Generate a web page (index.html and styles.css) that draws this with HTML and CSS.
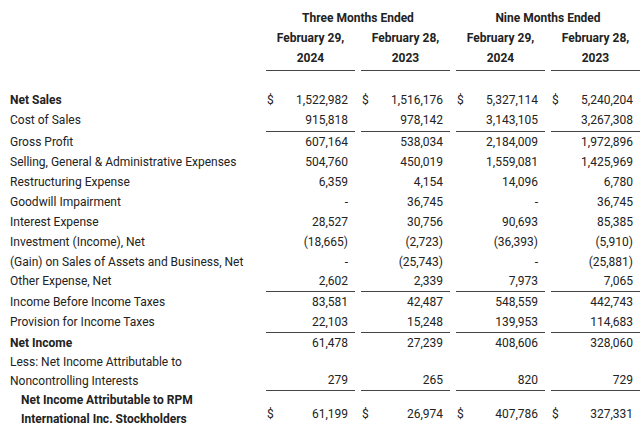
FILE: index.html
```html
<!DOCTYPE html>
<html lang="en">
<head>
<meta charset="utf-8">
<title>Income Statement</title>
<link rel="stylesheet" href="styles.css">
</head>
<body>
<div class="statement">
  <div class="row head-top">
    <div class="label"></div>
    <div class="group">Three Months Ended</div>
    <div class="group">Nine Months Ended</div>
  </div>
  <div class="row head-dates">
    <div class="label"></div>
    <div class="date">February 29,<br>2024</div>
    <div class="date">February 28,<br>2023</div>
    <div class="date">February 29,<br>2024</div>
    <div class="date">February 28,<br>2023</div>
  </div>
  <div class="spacer"></div>

  <div class="row">
    <div class="label strong">Net Sales</div>
    <div class="num"><span class="cur">$</span><span class="val">1,522,982</span></div>
    <div class="num"><span class="cur">$</span><span class="val">1,516,176</span></div>
    <div class="num"><span class="cur">$</span><span class="val">5,327,114</span></div>
    <div class="num"><span class="cur">$</span><span class="val">5,240,204</span></div>
  </div>
  <div class="row rule-first">
    <div class="label">Cost of Sales</div>
    <div class="num ruled"><span class="val">915,818</span></div>
    <div class="num ruled"><span class="val">978,142</span></div>
    <div class="num ruled"><span class="val">3,143,105</span></div>
    <div class="num ruled"><span class="val">3,267,308</span></div>
  </div>
  <div class="row">
    <div class="label">Gross Profit</div>
    <div class="num"><span class="val">607,164</span></div>
    <div class="num"><span class="val">538,034</span></div>
    <div class="num"><span class="val">2,184,009</span></div>
    <div class="num"><span class="val">1,972,896</span></div>
  </div>
  <div class="row">
    <div class="label">Selling, General &amp; Administrative Expenses</div>
    <div class="num"><span class="val">504,760</span></div>
    <div class="num"><span class="val">450,019</span></div>
    <div class="num"><span class="val">1,559,081</span></div>
    <div class="num"><span class="val">1,425,969</span></div>
  </div>
  <div class="row">
    <div class="label">Restructuring Expense</div>
    <div class="num"><span class="val">6,359</span></div>
    <div class="num"><span class="val">4,154</span></div>
    <div class="num"><span class="val">14,096</span></div>
    <div class="num"><span class="val">6,780</span></div>
  </div>
  <div class="row">
    <div class="label">Goodwill Impairment</div>
    <div class="num"><span class="val">-</span></div>
    <div class="num"><span class="val">36,745</span></div>
    <div class="num"><span class="val">-</span></div>
    <div class="num"><span class="val">36,745</span></div>
  </div>
  <div class="row">
    <div class="label">Interest Expense</div>
    <div class="num"><span class="val">28,527</span></div>
    <div class="num"><span class="val">30,756</span></div>
    <div class="num"><span class="val">90,693</span></div>
    <div class="num"><span class="val">85,385</span></div>
  </div>
  <div class="row">
    <div class="label">Investment (Income), Net</div>
    <div class="num"><span class="val">(18,665)</span></div>
    <div class="num"><span class="val">(2,723)</span></div>
    <div class="num"><span class="val">(36,393)</span></div>
    <div class="num"><span class="val">(5,910)</span></div>
  </div>
  <div class="row">
    <div class="label">(Gain) on Sales of Assets and Business, Net</div>
    <div class="num"><span class="val">-</span></div>
    <div class="num"><span class="val">(25,743)</span></div>
    <div class="num"><span class="val">-</span></div>
    <div class="num"><span class="val">(25,881)</span></div>
  </div>
  <div class="row tight">
    <div class="label">Other Expense, Net</div>
    <div class="num ruled"><span class="val">2,602</span></div>
    <div class="num ruled"><span class="val">2,339</span></div>
    <div class="num ruled"><span class="val">7,973</span></div>
    <div class="num ruled"><span class="val">7,065</span></div>
  </div>
  <div class="row">
    <div class="label">Income Before Income Taxes</div>
    <div class="num"><span class="val">83,581</span></div>
    <div class="num"><span class="val">42,487</span></div>
    <div class="num"><span class="val">548,559</span></div>
    <div class="num"><span class="val">442,743</span></div>
  </div>
  <div class="row">
    <div class="label">Provision for Income Taxes</div>
    <div class="num ruled"><span class="val">22,103</span></div>
    <div class="num ruled"><span class="val">15,248</span></div>
    <div class="num ruled"><span class="val">139,953</span></div>
    <div class="num ruled"><span class="val">114,683</span></div>
  </div>
  <div class="row">
    <div class="label strong">Net Income</div>
    <div class="num"><span class="val">61,478</span></div>
    <div class="num"><span class="val">27,239</span></div>
    <div class="num"><span class="val">408,606</span></div>
    <div class="num"><span class="val">328,060</span></div>
  </div>
  <div class="row tight">
    <div class="label">Less: Net Income Attributable to<br>Noncontrolling Interests</div>
    <div class="num ruled bottom"><span class="val">279</span></div>
    <div class="num ruled bottom"><span class="val">265</span></div>
    <div class="num ruled bottom"><span class="val">820</span></div>
    <div class="num ruled bottom"><span class="val">729</span></div>
  </div>
  <div class="row tight final">
    <div class="label strong indent">Net Income Attributable to RPM<br>International Inc. Stockholders</div>
    <div class="num bottom"><span class="cur">$</span><span class="val">61,199</span></div>
    <div class="num bottom"><span class="cur">$</span><span class="val">26,974</span></div>
    <div class="num bottom"><span class="cur">$</span><span class="val">407,786</span></div>
    <div class="num bottom"><span class="cur">$</span><span class="val">327,331</span></div>
  </div>
</div>
</body>
</html>
```

FILE: styles.css
```css
html, body {
  margin: 0;
  padding: 0;
  background: #ffffff;
  overflow: hidden;
}

body {
  font-family: Roboto, "Liberation Sans", Arial, sans-serif;
  font-size: 12px;
  line-height: 20px;
  color: #222222;
}

.statement {
  display: grid;
  grid-template-columns: 250px repeat(4, 89px);
  column-gap: 6px;
  padding: 8px 0 0 10px;
}

.row {
  display: contents;
}

.label {
  white-space: nowrap;
}

.strong {
  font-weight: 700;
}

.indent {
  padding-left: 11px;
}

.group {
  grid-column: span 2;
  text-align: center;
  font-weight: 700;
}

.date {
  text-align: center;
  font-weight: 700;
  padding-bottom: 2px;
  border-bottom: 1px solid #444444;
}

.spacer {
  grid-column: 1 / -1;
  height: 19px;
}

.num {
  display: flex;
  align-items: flex-start;
  padding-right: 7px;
  white-space: nowrap;
}

.num .cur {
  padding-left: 1px;
}

.num .val {
  margin-left: auto;
}

.ruled {
  border-bottom: 1px solid #444444;
}

.rule-first .ruled {
  padding-bottom: 1px;
}

.tight .label,
.tight .num {
  line-height: 19px;
}

.num.bottom {
  align-items: flex-end;
}

.final .num {
  line-height: 20px;
  padding-bottom: 5px;
}
```
